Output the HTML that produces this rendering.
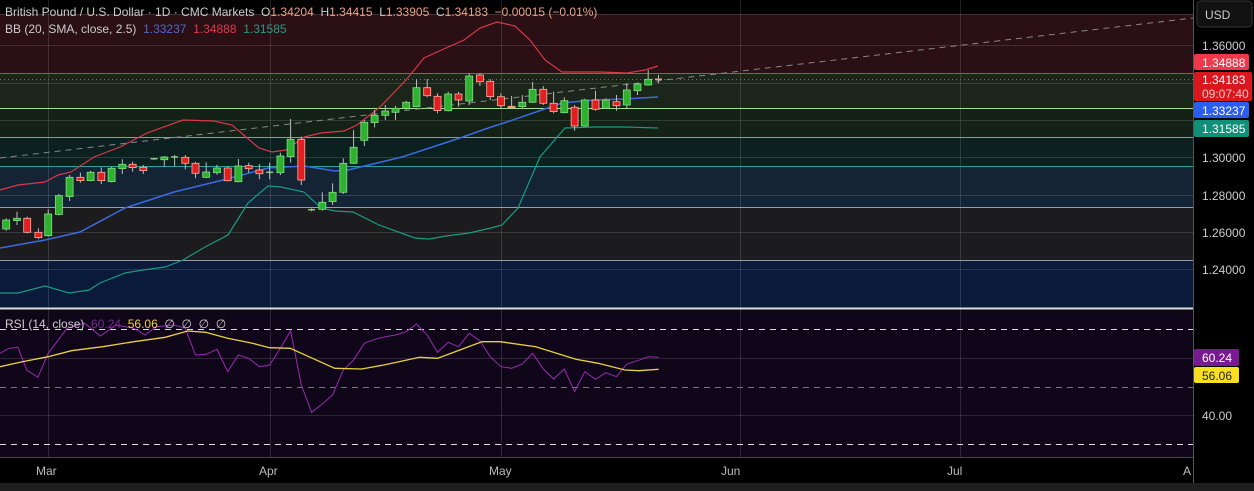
<!DOCTYPE html>
<html><head><meta charset="utf-8"><style>
html,body{margin:0;padding:0;background:#000;width:1254px;height:491px;overflow:hidden;font-family:"Liberation Sans",sans-serif}
svg{position:absolute;left:0;top:0}
.t{font-size:12px;white-space:pre}
</style></head><body>
<svg id="s" width="1254" height="491" xmlns="http://www.w3.org/2000/svg">
<rect width="1254" height="491" fill="#000"/>
<rect x="0" y="14" width="1193" height="59" fill="#2a0f15"/>
<rect x="0" y="73" width="1193" height="35" fill="#1b2519"/>
<rect x="0" y="108" width="1193" height="29" fill="#142116"/>
<rect x="0" y="137" width="1193" height="29" fill="#0b2120"/>
<rect x="0" y="166" width="1193" height="41" fill="#152435"/>
<rect x="0" y="207" width="1193" height="53" fill="#1c1c1e"/>
<rect x="0" y="260" width="1193" height="48" fill="#0a1a3a"/>
<rect x="0" y="310" width="1193" height="147" fill="#10061a"/>
<g stroke="rgba(255,255,255,0.13)" stroke-width="1">
<line x1="0" y1="14.5" x2="1193" y2="14.5"/><line x1="0" y1="45.5" x2="1193" y2="45.5"/>
<line x1="0" y1="157.5" x2="1193" y2="157.5"/><line x1="0" y1="195.5" x2="1193" y2="195.5"/>
<line x1="0" y1="232.5" x2="1193" y2="232.5"/><line x1="0" y1="269.5" x2="1193" y2="269.5"/>
<line x1="0" y1="120.5" x2="1193" y2="120.5"/><line x1="0" y1="83.5" x2="1193" y2="83.5"/>
<line x1="48.5" y1="0" x2="48.5" y2="457"/><line x1="270.5" y1="0" x2="270.5" y2="457"/>
<line x1="501.5" y1="0" x2="501.5" y2="457"/><line x1="740.5" y1="0" x2="740.5" y2="457"/><line x1="960.5" y1="0" x2="960.5" y2="457"/>
<line x1="0" y1="358.5" x2="1193" y2="358.5"/><line x1="0" y1="415.5" x2="1193" y2="415.5"/>
</g>
<line x1="0" y1="73.5" x2="1193" y2="73.5" stroke="#d04058"/>
<line x1="0" y1="108.5" x2="1193" y2="108.5" stroke="#a8dc98"/>
<line x1="0" y1="137.5" x2="1193" y2="137.5" stroke="#5cc060"/>
<line x1="0" y1="166.5" x2="1193" y2="166.5" stroke="#2aa0a0"/>
<line x1="0" y1="207.5" x2="1193" y2="207.5" stroke="#5fb0e8"/>
<line x1="0" y1="260.5" x2="1193" y2="260.5" stroke="#9a9aa8"/>
<line x1="0" y1="308.5" x2="1193" y2="308.5" stroke="#e0e0e0" stroke-width="2"/>
<line x1="0" y1="79.5" x2="1193" y2="79.5" stroke="#e04040" stroke-dasharray="1 3"/>
<line x1="0" y1="158" x2="1193" y2="18" stroke="#888" stroke-dasharray="6 5"/>
<g stroke-dasharray="6 5" stroke-width="1">
<line x1="0" y1="329.5" x2="1193" y2="329.5" stroke="#ddd"/>
<line x1="0" y1="387.5" x2="1193" y2="387.5" stroke="#777"/>
<line x1="0" y1="444.5" x2="1193" y2="444.5" stroke="#ddd"/>
</g>
<line x1="0" y1="457.5" x2="1193" y2="457.5" stroke="#444"/>
<line x1="1193.5" y1="0" x2="1193.5" y2="483" stroke="#555"/>
<rect x="0" y="483" width="1254" height="8" fill="#1e1e1e"/>
<g id="ind" fill="none" stroke-width="1.2"></g>
<g id="cd"></g>
<g class="t" fill="#ccc">
<text x="5" y="16" xml:space="preserve">British Pound / U.S. Dollar · 1D · CMC Markets  O<tspan fill="#f0a080">1.34204</tspan>  H<tspan fill="#f0a080">1.34415</tspan>  L<tspan fill="#f0a080">1.33905</tspan>  C<tspan fill="#f0a080">1.34183</tspan>  <tspan fill="#f0a080">−0.00015 (−0.01%)</tspan></text>
<text x="5" y="33" xml:space="preserve">BB (20, SMA, close, 2.5)  <tspan fill="#4a6ad0">1.33237</tspan>  <tspan fill="#e03848">1.34888</tspan>  <tspan fill="#2a9a80">1.31585</tspan></text>
<text x="5" y="328" xml:space="preserve">RSI (14, close)  <tspan fill="#7a2a90">60.24</tspan>  <tspan fill="#f0d040">56.06</tspan>  ∅  ∅  ∅  ∅</text>
<text x="36" y="475" fill="#bbb">Mar</text><text x="259" y="475" fill="#bbb">Apr</text><text x="489" y="475" fill="#bbb">May</text>
<text x="721" y="475" fill="#bbb">Jun</text><text x="947" y="475" fill="#bbb">Jul</text><text x="1183" y="475" fill="#bbb">A</text>
</g>
<rect x="1197" y="1" width="55" height="26" rx="4" fill="#111" stroke="#333"/>
<g class="t" fill="#ccc">
<text x="1205" y="19">USD</text>
<text x="1202" y="50">1.36000</text>
<text x="1202" y="162">1.30000</text><text x="1202" y="200">1.28000</text>
<text x="1202" y="237">1.26000</text><text x="1202" y="274">1.24000</text>
<text x="1202" y="420">40.00</text>
</g>
<rect x="1194" y="54" width="55" height="16" rx="2" fill="#f0384a"/>
<rect x="1194" y="72" width="58" height="29" rx="2" fill="#d8181e"/>
<rect x="1194" y="102" width="55" height="16" rx="2" fill="#2a5ef0"/>
<rect x="1194" y="120" width="55" height="17" rx="2" fill="#109078"/>
<rect x="1194" y="349" width="45" height="17" rx="2" fill="#7a1a90"/>
<rect x="1194" y="367" width="45" height="16" rx="2" fill="#f8e020"/>
<g class="t" fill="#fff">
<text x="1202" y="67">1.34888</text>
<text x="1202" y="84">1.34183</text>
<text x="1202" y="98" fill="#f0c0c0">09:07:40</text>
<text x="1202" y="115">1.33237</text>
<text x="1202" y="133">1.31585</text>
<text x="1202" y="362">60.24</text>
<text x="1202" y="380" fill="#222">56.06</text>
</g>
</svg>
<script>
var NS="http://www.w3.org/2000/svg";
function pl(pts,c,w){var p=document.createElementNS(NS,"polyline");p.setAttribute("points",pts.map(function(a){return a[0]+","+a[1]}).join(" "));p.setAttribute("stroke",c);p.setAttribute("stroke-width",w||1.2);p.setAttribute("fill","none");document.getElementById("ind").appendChild(p);}
function z(a,oy){return a.map(function(q){return [(q[0]/2.24).toFixed(1),(q[1]/3+oy).toFixed(1)]});}
pl([[0,190],[18,185],[45,182],[58,175],[71,172],[94,157],[120,147],[147,133],[183,120],[214,121],[232,125],[246,137],[259,148],[272,152],[286,150],[304,137],[321,133],[344,131],[357,125],[380,107],[406,80],[424,58],[446,48],[464,40],[480,28],[497,22],[515,26],[530,40],[545,60],[562,72],[600,72],[627,73],[645,70],[658,66]],"#d83848");
pl([[0,248],[45,240],[80,232],[125,208],[174,192],[223,180],[268,168],[304,166],[335,171],[348,170],[402,157],[460,138],[491,127],[504,123],[536,112],[562,103],[594,100],[625,99],[658,97]],"#3a6ae0",1.5);
pl([[0,293],[18,293],[45,286],[69,293],[89,290],[100,283],[125,273],[143,270],[165,267],[183,260],[205,247],[228,235],[248,203],[268,186],[281,187],[304,192],[321,208],[335,211],[353,212],[379,225],[415,238],[429,239],[446,236],[469,233],[491,228],[502,225],[518,208],[540,157],[565,128],[594,127],[625,127],[658,128]],"#1a9a80");
pl(z([[0,160],[20,145],[40,142],[60,210],[85,232],[108,160],[150,85],[190,70],[225,108],[260,75],[300,85],[325,105],[350,80],[390,75],[415,85],[438,165],[462,163],[486,148],[510,215],[534,165],[557,175],[581,200],[604,195],[628,145],[651,92],[675,255],[698,337],[722,312],[745,285],[769,210],[792,180],[816,130],[839,118],[863,110],[886,105],[910,95],[933,72],[957,105],[980,157],[1004,127],[1027,140],[1051,100],[1075,122],[1098,170],[1122,200],[1146,205],[1170,192],[1193,160],[1217,207],[1240,237],[1264,207],[1287,275],[1310,215],[1334,238],[1357,218],[1381,230],[1404,192],[1428,182],[1452,170],[1475,172]],300),"#9a2ab0",1);
pl(z([[0,200],[50,185],[108,170],[160,152],[230,140],[300,125],[370,112],[420,93],[460,97],[510,115],[560,128],[604,143],[650,145],[700,175],[750,205],[810,207],[860,195],[940,172],[980,175],[1030,150],[1080,125],[1120,125],[1200,140],[1290,178],[1340,190],[1400,210],[1430,212],[1475,208]],300),"#e8d040",1.3);
var C=[[14,"G",540,567,535,572],[38,"G",535,542,515,555],[61,"R",535,577,530,580],[86,"R",577,593,565,598],[108,"G",522,587,508,590],[132,"G",467,523,462,526],[156,"G",412,470,405,483],[180,"R",412,422,398,428],[203,"G",397,422,392,424],[227,"R",397,422,382,432],[250,"G",385,425,380,427],[274,"G",373,386,358,402],[297,"R",373,383,365,395],[321,"R",382,392,375,402],[345,"D",356,358,354,360],[368,"G",351,359,348,380],[391,"D",351,352,345,378],[415,"R",352,370,345,388],[438,"R",370,400,365,415],[462,"G",396,412,367,414],[486,"G",384,398,374,404],[510,"R",384,422,380,424],[534,"G",378,425,357,427],[557,"R",377,386,368,398],[581,"R",390,401,372,418],[604,"D",397,398,368,418],[628,"G",348,398,338,405],[651,"G",298,350,237,368],[675,"R",298,420,290,435],[698,"D",509,511,505,514],[722,"G",487,508,457,512],[745,"G",457,485,430,495],[769,"G",370,457,355,462],[792,"G",322,370,270,372],[816,"G",247,301,240,318],[839,"G",226,248,210,262],[863,"G",213,226,195,240],[886,"G",205,217,197,240],[910,"G",187,205,182,210],[933,"G",143,200,118,202],[957,"R",143,167,117,172],[980,"R",169,212,160,220],[1004,"G",162,212,155,214],[1027,"R",162,180,155,200],[1051,"G",108,183,100,195],[1075,"R",105,125,100,138],[1098,"R",124,170,118,180],[1122,"R",170,197,160,205],[1146,"O",199,202,168,205],[1170,"G",187,200,165,205],[1193,"G",148,187,126,189],[1217,"R",148,190,138,195],[1240,"R",190,215,155,220],[1264,"G",182,218,172,220],[1287,"R",202,258,195,272],[1310,"G",180,258,176,260],[1334,"R",180,208,152,212],[1357,"G",180,205,175,207],[1381,"R",185,197,165,212],[1404,"G",150,195,130,205],[1428,"G",132,152,128,165],[1452,"G",118,135,90,137],[1475,"D",118,119,105,130]];
var g=document.getElementById("cd"),h="";
C.forEach(function(c){var x=c[0]/2.24,t=c[2]/3+40,b=c[3]/3+40,wt=c[4]/3+40,wb=c[5]/3+40;
var f=c[1]=="G"?"#30b030":c[1]=="R"?"#e02020":c[1]=="O"?"#f0a080":"#ccc",s=c[1]=="G"?"#80e080":c[1]=="R"?"#ffb0a0":f;
h+='<line x1="'+x.toFixed(1)+'" y1="'+wt.toFixed(1)+'" x2="'+x.toFixed(1)+'" y2="'+wb.toFixed(1)+'" stroke="#bbb" stroke-width="1"/>';
if(c[1]=="D"){h+='<line x1="'+(x-3.5)+'" y1="'+t.toFixed(1)+'" x2="'+(x+3.5)+'" y2="'+t.toFixed(1)+'" stroke="'+(c[0]==1475?"#f0a080":"#8c8")+'" stroke-width="1.5"/>';}
else h+='<rect x="'+(x-3.5).toFixed(1)+'" y="'+t.toFixed(1)+'" width="7" height="'+Math.max(1.5,b-t).toFixed(1)+'" fill="'+f+'" stroke="'+s+'" stroke-width="0.8"/>';});
g.innerHTML=h;
</script>
</body></html>
